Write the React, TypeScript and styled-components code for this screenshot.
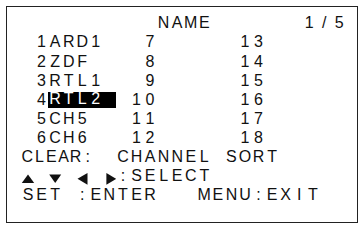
import React from 'react';
import styled, { createGlobalStyle } from 'styled-components';

// OSD character grid
const PITCH = 13.57;
const COLS = 24;
const ROW_H = 19.1;

const GlobalStyle = createGlobalStyle`
  html, body {
    margin: 0;
    padding: 0;
    background: #fff;
  }
  body {
    width: 362px;
    height: 228px;
    overflow: hidden;
  }
`;

const Screen = styled.div`
  box-sizing: border-box;
  width: 352px;
  height: 217px;
  margin: 6px;
  padding: 6.4px 0 0 14.2px;
  border: 1px solid #222;
  font-family: "Liberation Sans", Arial, sans-serif;
  font-size: 16px;
  color: #111;
`;

const Line = styled.div`
  display: grid;
  grid-template-columns: repeat(${COLS}, ${PITCH}px);
  height: ${ROW_H}px;
  line-height: ${ROW_H}px;
`;

const Seg = styled.span<{ $col: number; $span?: number; $align?: string }>`
  grid-column: ${p => p.$col + 1} / span ${p => p.$span ?? 1};
  justify-self: ${p => p.$align ?? 'start'};
  display: flex;
  white-space: nowrap;
`;

const Selected = styled(Seg)`
  align-self: start;
  margin-top: 2.6px;
  height: 16px;
  line-height: 13px;
  background: #000;
  color: #fff;
`;

const Cell = styled.span<{ $w: number }>`
  flex: none;
  width: ${p => p.$w}px;
  text-align: center;
`;

const Arrow = styled.svg`
  flex: none;
  display: block;
  fill: #111;
`;

const Chars = ({ text, w = PITCH }: { text: string; w?: number }) => (
  <>
    {[...text].map((c, i) => (
      <Cell key={i} $w={w}>{c === ' ' ? '\u00a0' : c}</Cell>
    ))}
  </>
);

const TRIANGLES: Record<string, string> = {
  up: '0.8,16.9 13.2,16.9 7,8.6',
  down: '1.2,8.6 13.2,8.6 7.2,16.9',
  left: '12.5,6.9 12.5,18.8 2.5,12.85',
  right: '3.4,6.9 3.4,18.8 13.2,12.85',
};

const Tri = ({ dir }: { dir: string }) => (
  <Arrow width={PITCH} height={ROW_H} viewBox={`0 0 ${PITCH} ${ROW_H}`}>
    <polygon points={TRIANGLES[dir]} />
  </Arrow>
);

const Gap = () => <Cell $w={PITCH} />;

const channels = [
  { no: '1', name: 'ARD1', left: '7', right: '13' },
  { no: '2', name: 'ZDF', left: '8', right: '14' },
  { no: '3', name: 'RTL1', left: '9', right: '15' },
  { no: '4', name: 'RTL2', left: '10', right: '16' },
  { no: '5', name: 'CH5', left: '11', right: '17' },
  { no: '6', name: 'CH6', left: '12', right: '18' },
];

const SELECTED = 3;

export default function App() {
  return (
    <>
      <GlobalStyle />
      <Screen>
        <Line>
          <Seg $col={10} $span={4}><Chars text="NAME" /></Seg>
          <Seg $col={20} $span={4} $align="end"><Chars text="1/5" w={15} /></Seg>
        </Line>

        {channels.map((ch, i) => {
          const Name = i === SELECTED ? Selected : Seg;
          return (
            <Line key={ch.no}>
              <Seg $col={1}><Chars text={ch.no} /></Seg>
              <Name $col={2} $span={5} $align="stretch"><Chars text={ch.name} /></Name>
              <Seg $col={10 - ch.left.length} $span={ch.left.length}><Chars text={ch.left} /></Seg>
              <Seg $col={16} $span={2}><Chars text={ch.right} /></Seg>
            </Line>
          );
        })}

        <Line>
          <Seg $col={0} $span={6}><Chars text="CLEAR:" w={12.1} /></Seg>
          <Seg $col={7} $span={7}><Chars text="CHANNEL" /></Seg>
          <Seg $col={15} $span={4}><Chars text="SORT" /></Seg>
        </Line>

        <Line>
          <Seg $col={0} $span={7}>
            <Tri dir="up" />
            <Gap />
            <Tri dir="down" />
            <Gap />
            <Tri dir="left" />
            <Gap />
            <Tri dir="right" />
          </Seg>
          <Seg $col={7} $span={7}><Chars text=":SELECT" /></Seg>
        </Line>

        <Line>
          <Seg $col={0} $span={3}><Chars text="SET" /></Seg>
          <Seg $col={4} $span={6}><Chars text=":ENTER" /></Seg>
          <Seg $col={13} $span={9}><Chars text="MENU:EXIT" /></Seg>
        </Line>
      </Screen>
    </>
  );
}
